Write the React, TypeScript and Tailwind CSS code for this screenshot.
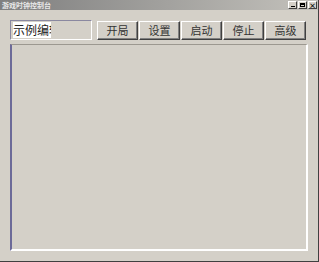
const buttons = ['开局', '设置', '启动', '停止', '高级'];

const font = { fontFamily: '"Noto Sans CJK SC", "Liberation Sans", sans-serif' };

const App = () => {
  return (
    <div
      className="w-[319px] h-[262px] bg-[#d4d0c8] flex flex-col border-r border-b border-r-[#404040] border-b-[#404040] overflow-hidden"
      style={font}
    >
      <div className="h-[10px] flex items-center justify-between bg-gradient-to-r from-[#7f7f7f] to-[#c4c2bc] pl-[2px] pr-[1px]">
        <span className="text-[7px] leading-none text-[#e8e8e8] font-bold">游戏时钟控制台</span>
        <div className="flex gap-[1px]">
          <div className="w-[9px] h-[8px] bg-[#d4d0c8] border-t border-l border-white border-r border-b border-r-[#404040] border-b-[#404040] flex items-end justify-center pb-[1px]">
            <div className="w-[4px] h-[1px] bg-black" />
          </div>
          <div className="w-[9px] h-[8px] bg-[#d4d0c8] border-t border-l border-white border-r border-b border-r-[#404040] border-b-[#404040] flex items-center justify-center">
            <div className="w-[5px] h-[4px] border border-black border-t-2" />
          </div>
          <div className="w-[9px] h-[8px] bg-[#d4d0c8] border-t border-l border-white border-r border-b border-r-[#404040] border-b-[#404040] flex items-center justify-center text-[7px] leading-none font-bold text-black">
            ×
          </div>
        </div>
      </div>

      <div className="flex-1 flex flex-col pl-[10px] pt-[10px]">
        <div className="flex items-center">
          <div className="w-[82px] h-[20px] flex items-center border-t border-l border-[#8a88a0] border-r border-b border-r-white border-b-white pl-[2px]">
            <div className="w-[38px] h-[16px] bg-white overflow-hidden whitespace-nowrap text-[12px] leading-[16px] text-[#222]">
              示例编辑
            </div>
          </div>
          <div className="flex gap-[1px] ml-[5px]">
            {buttons.map((b) => (
              <div
                key={b}
                className="w-[41px] h-[19px] flex items-center justify-center border-t border-l border-white border-r border-b border-r-[#404040] border-b-[#404040] shadow-[inset_-1px_-1px_0_#808080] text-[11px] leading-none text-[#333]"
              >
                {b}
              </div>
            ))}
          </div>
        </div>

        <div className="mt-[4px] w-[298px] h-[207px] border-t border-t-[#9c9890] border-l-2 border-l-[#6c6a98] border-r-2 border-r-white border-b-2 border-b-white" />
      </div>
    </div>
  );
};

export default App;
